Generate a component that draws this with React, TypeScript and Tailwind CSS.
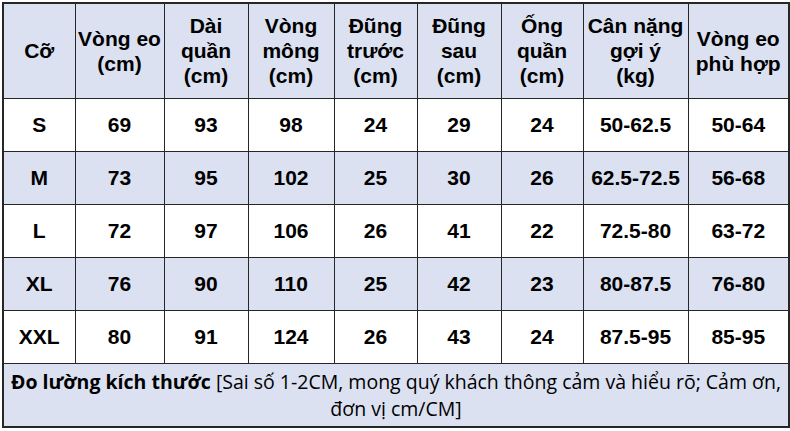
import React from "react";

const cols = [72, 89, 84, 86, 83, 84, 82, 105, 101];

const headers: string[][] = [
  ["Cỡ"],
  ["Vòng eo", "(cm)"],
  ["Dài", "quần", "(cm)"],
  ["Vòng", "mông", "(cm)"],
  ["Đũng", "trước", "(cm)"],
  ["Đũng", "sau", "(cm)"],
  ["Ống", "quần", "(cm)"],
  ["Cân nặng", "gợi ý", "(kg)"],
  ["Vòng eo", "phù hợp"],
];

const rows: string[][] = [
  ["S", "69", "93", "98", "24", "29", "24", "50-62.5", "50-64"],
  ["M", "73", "95", "102", "25", "30", "26", "62.5-72.5", "56-68"],
  ["L", "72", "97", "106", "26", "41", "22", "72.5-80", "63-72"],
  ["XL", "76", "90", "110", "25", "42", "23", "80-87.5", "76-80"],
  ["XXL", "80", "91", "124", "26", "43", "24", "87.5-95", "85-95"],
];

export default function App() {
  return (
    <div className="h-[431px] w-[790px] bg-white pl-[2px] pt-[2px]">
      <table
        className="table-fixed border-collapse border-2 border-[#262626] text-black"
        style={{ width: 786 }}
      >
        <colgroup>
          {cols.map((w, i) => (
            <col key={i} style={{ width: w }} />
          ))}
        </colgroup>
        <thead>
          <tr className="h-[95px] bg-[#dbe1f1]">
            {headers.map((h, i) => (
              <th
                key={i}
                className="border-[1.5px] border-[#262626] p-0 text-center align-middle font-['Liberation_Sans',Arial,sans-serif] text-[21px] font-bold leading-[25px]"
              >
                {h.map((line, j) => (
                  <div key={j}>{line}</div>
                ))}
              </th>
            ))}
          </tr>
        </thead>
        <tbody>
          {rows.map((r, i) => (
            <tr
              key={i}
              className={`h-[53px] ${i % 2 === 1 ? "bg-[#dbe1f1]" : "bg-white"}`}
            >
              {r.map((c, j) => (
                <td
                  key={j}
                  className="border-[1.5px] border-[#262626] p-0 text-center align-middle font-['Liberation_Sans',Arial,sans-serif] text-[21px] font-bold"
                >
                  {c}
                </td>
              ))}
            </tr>
          ))}
          <tr className="h-[64px] bg-[#dbe1f1]">
            <td
              colSpan={9}
              className="border-[1.5px] border-[#262626] px-1 text-center align-middle font-['Open_Sans','Noto_Sans',sans-serif] text-[19.5px] leading-[27px]"
            >
              <span className="font-bold">Đo lường kích thước</span> [Sai số
              1-2CM, mong quý khách thông cảm và hiểu rõ; Cảm ơn, đơn vị cm/CM]
            </td>
          </tr>
        </tbody>
      </table>
    </div>
  );
}
